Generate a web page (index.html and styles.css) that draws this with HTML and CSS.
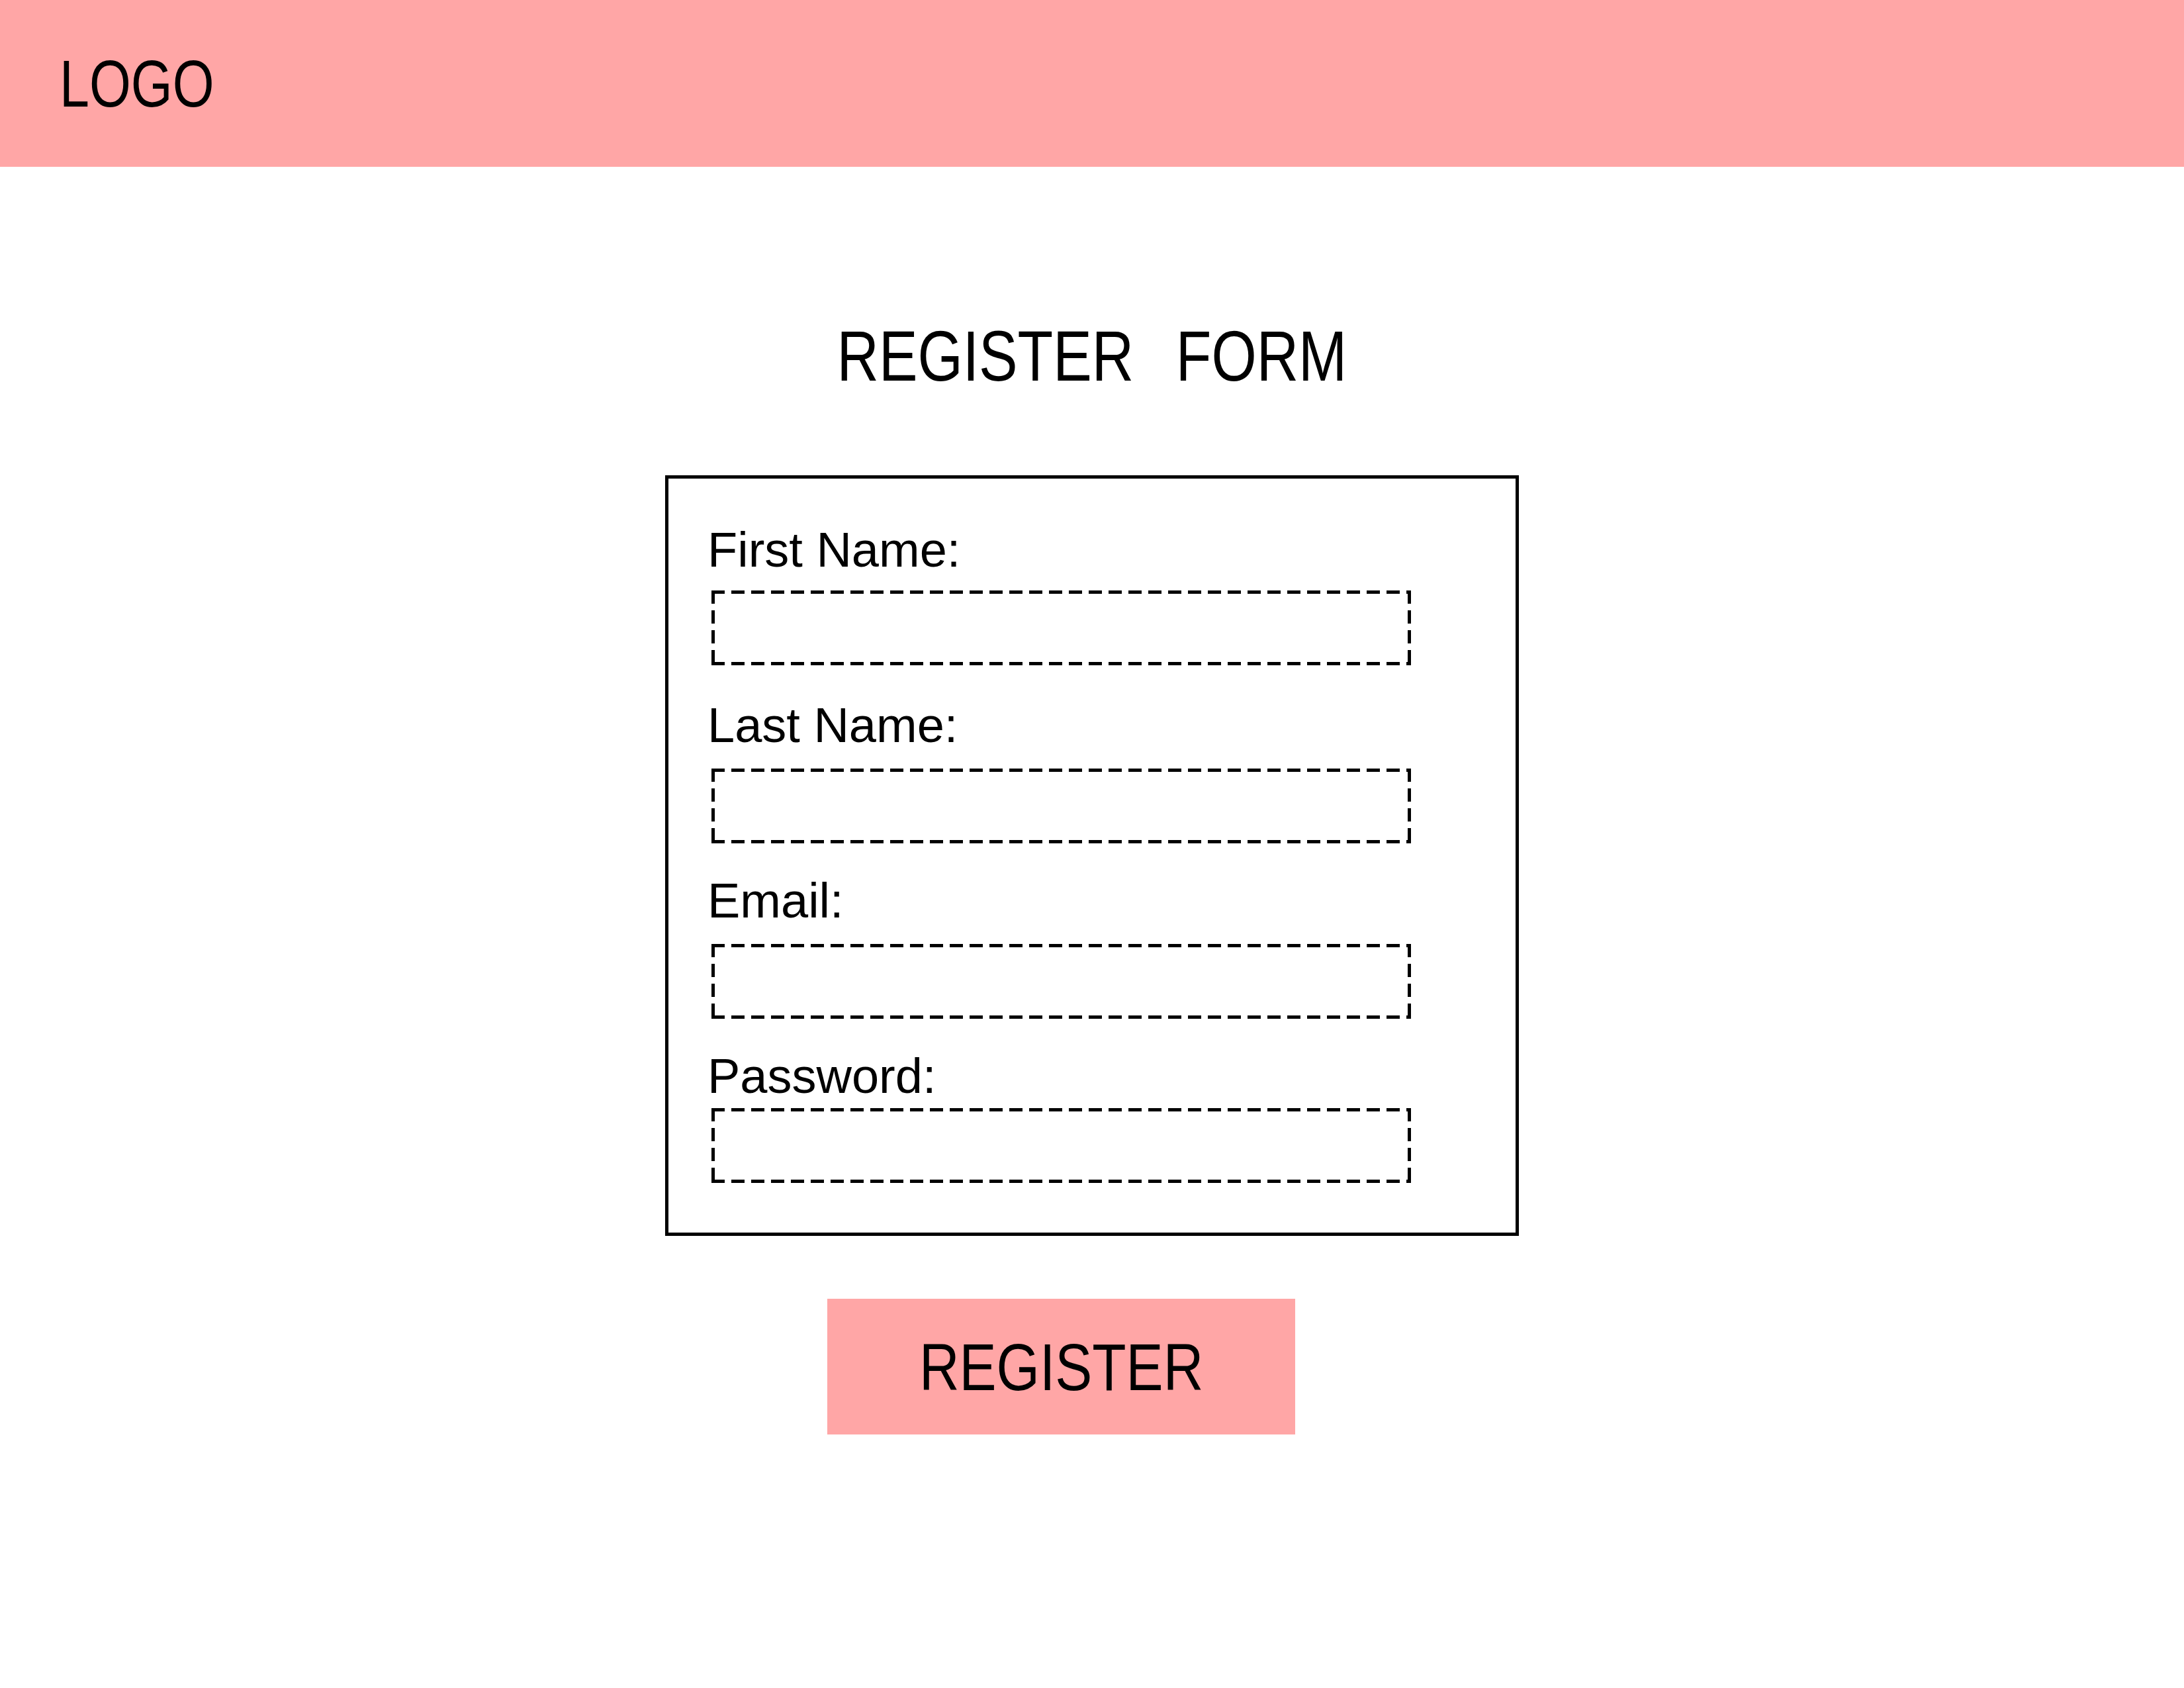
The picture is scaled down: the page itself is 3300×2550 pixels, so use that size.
FILE: index.html
```html
<!DOCTYPE html>
<html lang="en">
<head>
    <meta charset="UTF-8">
    <meta name="viewport" content="width=device-width, initial-scale=1.0">
    <title>Register Form</title>
    <link rel="stylesheet" href="styles.css">
</head>
<body>
    <header class="topbar">
        <span class="logo narrow">LOGO</span>
    </header>

    <main class="page">
        <h1 class="page-title"><span class="narrow">REGISTER FORM</span></h1>

        <div class="panel">
            <form class="card">
                <div class="field">
                    <label for="first-name">First Name:</label>
                    <input type="text" id="first-name" name="first-name">
                </div>

                <div class="field">
                    <label for="last-name">Last Name:</label>
                    <input type="text" id="last-name" name="last-name">
                </div>

                <div class="field">
                    <label for="email">Email:</label>
                    <input type="email" id="email" name="email">
                </div>

                <div class="field field-tight">
                    <label for="password">Password:</label>
                    <input type="password" id="password" name="password">
                </div>
            </form>

            <div class="actions">
                <button type="button" class="register-btn"><span class="narrow">REGISTER</span></button>
            </div>
        </div>
    </main>
</body>
</html>
```

FILE: styles.css
```css
body {
    margin: 0;
    font-family: "Liberation Sans", Arial, sans-serif;
    color: #000;
    background-color: #fff;
}
/* condensed look for the headings (no narrow face installed) */
.narrow {
    display: inline-block;
    transform: scaleX(0.82);
}
.topbar {
    height: 252px;
    background-color: #ffa6a6;
    display: flex;
    align-items: center;
    padding-left: 90px;
}
.logo {
    font-size: 101px;
    line-height: 1;
    transform-origin: left center;
    transform: scaleX(0.8);
}
.page-title {
    margin: 233px 0 126px;
    text-align: center;
    font-weight: normal;
    font-size: 107px;
    line-height: 1;
    word-spacing: 48px;
}
.panel {
    width: 1290px;
    margin: 0 auto;
}
.card {
    box-sizing: border-box;
    width: 1290px;
    border: 5px solid #000;
    padding: 71px 158px 75px 65px;
}
.field + .field {
    margin-top: 50px;
}
label {
    display: block;
    font-size: 74px;
    line-height: 74px;
    margin: 0 0 28px -6px;
}
.field:first-child label {
    margin-bottom: 24px;
}
.field:first-child + .field {
    margin-top: 54px;
}
.field-tight label {
    margin-bottom: 11px;
}
input {
    display: block;
    box-sizing: border-box;
    width: 1057px;
    height: 113px;
    border: none;
    outline: none;
    padding: 0 20px;
    font: inherit;
    font-size: 50px;
    /* dashed outline: 20px dash, 10px gap */
    background:
        repeating-linear-gradient(90deg, #000 0 20px, transparent 20px 30px) left top / 100% 5px no-repeat,
        repeating-linear-gradient(90deg, #000 0 20px, transparent 20px 30px) left bottom / 100% 5px no-repeat,
        repeating-linear-gradient(180deg, #000 0 20px, transparent 20px 30px) left top / 5px 100% no-repeat,
        repeating-linear-gradient(180deg, #000 0 20px, transparent 20px 30px) right top / 5px 100% no-repeat;
}
.actions {
    display: flex;
    justify-content: center;
    padding: 0 163px 0 70px;
    margin-top: 95px;
}
.register-btn {
    width: 707px;
    height: 205px;
    border: none;
    background-color: #ffa6a6;
    color: #000;
    font-family: "Liberation Sans", Arial, sans-serif;
    font-size: 100px;
    line-height: 1;
    padding: 0;
    cursor: pointer;
}
.register-btn .narrow {
    transform: scaleX(0.84);
}
```
